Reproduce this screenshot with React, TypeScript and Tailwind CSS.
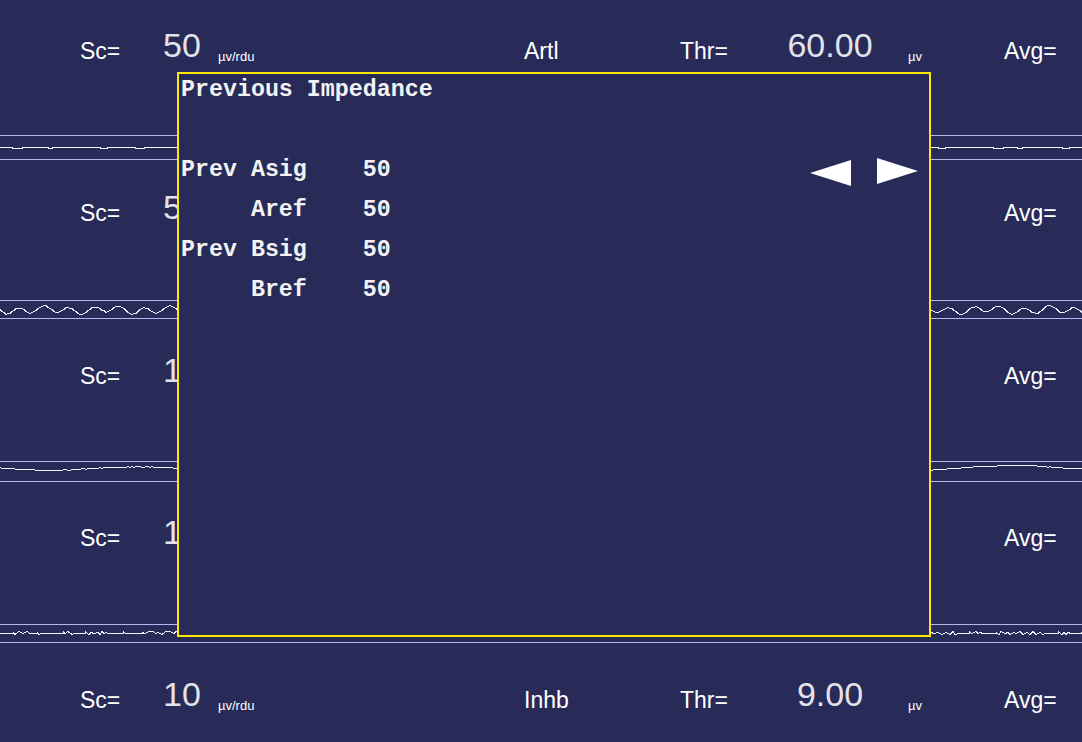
import React from 'react';

const W = 1082;

// small deterministic generator so the traces look the same every render
function rng(seed: number) {
  let s = seed;
  return () => {
    s = (s * 16807) % 2147483647;
    return s / 2147483647;
  };
}

function flatTrace(seed: number, base: number) {
  const r = rng(seed);
  const pts: string[] = [];
  let x = 0;
  let down = false;
  while (x <= W) {
    const len = down ? 3 + Math.floor(r() * 8) : 12 + Math.floor(r() * 50);
    const y = base + (down ? 1 : 0) + 0.5;
    pts.push(`${x},${y}`, `${Math.min(x + len, W)},${y}`);
    x += len;
    down = !down;
  }
  return pts.join(' ');
}

function waveTrace(seed: number, base: number, amp: number, p1: number, p2: number) {
  const r = rng(seed);
  const ph = r() * 6;
  const pts: string[] = [];
  for (let x = 0; x <= W; x += 2) {
    const y =
      base +
      amp * 0.7 * Math.sin(x / p1 + ph) +
      amp * 0.3 * Math.sin(x / p2 + ph * 2) +
      (r() - 0.5) * 0.6;
    pts.push(`${x},${Math.round(y) + 0.5}`);
  }
  return pts.join(' ');
}

function spikyTrace(seed: number, base: number) {
  const r = rng(seed);
  const pts: string[] = [];
  let x = 0;
  while (x <= W) {
    if (r() < 0.3) {
      const len = 6 + Math.floor(r() * 16);
      pts.push(`${x},${base + 0.5}`, `${x + len},${base + 0.5}`);
      x += len;
    } else {
      const n = 2 + Math.floor(r() * 5);
      for (let i = 0; i < n; i++) {
        const y = base + (i % 2 === 0 ? -1 - Math.floor(r() * 2) : Math.floor(r() * 2));
        pts.push(`${x},${y + 0.5}`);
        x += 2 + Math.floor(r() * 3);
      }
    }
  }
  return pts.join(' ');
}

const channels = [
  { sc: '50', mode: 'Artl', thr: '60.00', rowMt: 'mt-0' },
  { sc: '50', mode: 'Artl', thr: '30.00', rowMt: 'mt-[2px]' },
  { sc: '10', mode: 'Inhb', thr: '5.00', rowMt: 'mt-[6px]' },
  { sc: '10', mode: 'Inhb', thr: '5.00', rowMt: 'mt-[5px]' },
  { sc: '10', mode: 'Inhb', thr: '9.00', rowMt: 'mt-[6px]' },
];

const bands = [
  { cls: 'mt-[33px] h-[25px]', inner: 23, points: flatTrace(7, 11) },
  { cls: 'mt-[36px] h-[19px]', inner: 17, points: waveTrace(11, 8.5, 4.5, 4, 10) },
  { cls: 'mt-[34px] h-[21px]', inner: 19, points: waveTrace(3, 5.5, 2.6, 28, 60) },
  { cls: 'mt-[35px] h-[19px]', inner: 17, points: spikyTrace(19, 8) },
];

function LabelRow({ ch }: { ch: (typeof channels)[number] }) {
  return (
    <div className={`flex h-[102px] shrink-0 items-start text-white ${ch.rowMt}`}>
      <div className="w-[163px] pl-[80px] pt-[40px] text-[23px] leading-none">Sc=</div>
      <div className="w-[55px] pt-[28px] text-[34px] leading-none text-[#e2e2ea]">{ch.sc}</div>
      <div className="w-[306px] pt-[50px] text-[13px] leading-none">µv/rdu</div>
      <div className="w-[156px] pt-[40px] text-[23px] leading-none">{ch.mode}</div>
      <div className="w-[90px] pt-[40px] text-[23px] leading-none">Thr=</div>
      <div className="w-[120px] pt-[28px] text-center text-[34px] leading-none text-[#e2e2ea]">{ch.thr}</div>
      <div className="w-[114px] pl-[18px] pt-[50px] text-[13px] leading-none">µv</div>
      <div className="pt-[40px] text-[23px] leading-none">Avg=</div>
    </div>
  );
}

function Band({ band }: { band: (typeof bands)[number] }) {
  return (
    <div className={`shrink-0 border-y border-[#b6b8ee] ${band.cls}`}>
      <svg
        width={W}
        height={band.inner}
        viewBox={`0 0 ${W} ${band.inner}`}
        className="block"
        shapeRendering="crispEdges"
      >
        <polyline points={band.points} fill="none" stroke="#e8f6ff" strokeWidth={1} />
      </svg>
    </div>
  );
}

const impedance = [
  'Prev Asig    50',
  '     Aref    50',
  'Prev Bsig    50',
  '     Bref    50',
];

export default function App() {
  return (
    <div
      className="relative h-[742px] w-[1082px] overflow-hidden bg-[#282a58]"
      style={{ fontFamily: '"Liberation Sans", Arial, sans-serif' }}
    >
      <div className="flex flex-col">
        {channels.map((ch, i) => (
          <React.Fragment key={i}>
            <LabelRow ch={ch} />
            {bands[i] && <Band band={bands[i]} />}
          </React.Fragment>
        ))}
      </div>

      {/* Previous impedance popup */}
      <div
        className="absolute left-[177px] top-[72px] h-[565px] w-[754px] border-2 border-[#ffe800] bg-[#282a58] pl-[2px] pt-[2px] font-bold text-[#f2f2f2]"
        style={{ fontFamily: '"Courier New", "Liberation Mono", monospace' }}
      >
        <div className="text-[23.3px] leading-[28px] whitespace-pre">Previous Impedance</div>
        <div className="mt-[46px]">
          {impedance.map((line) => (
            <div key={line} className="text-[23.3px] leading-[40px] whitespace-pre">
              {line}
            </div>
          ))}
        </div>

        <svg
          className="absolute left-[628px] top-[82px]"
          width={114}
          height={32}
          viewBox="0 0 114 32"
        >
          <polygon points="3,17 44,4 44,30" fill="#ffffff" />
          <polygon points="70,2 70,28 111,15" fill="#ffffff" />
        </svg>
      </div>
    </div>
  );
}
